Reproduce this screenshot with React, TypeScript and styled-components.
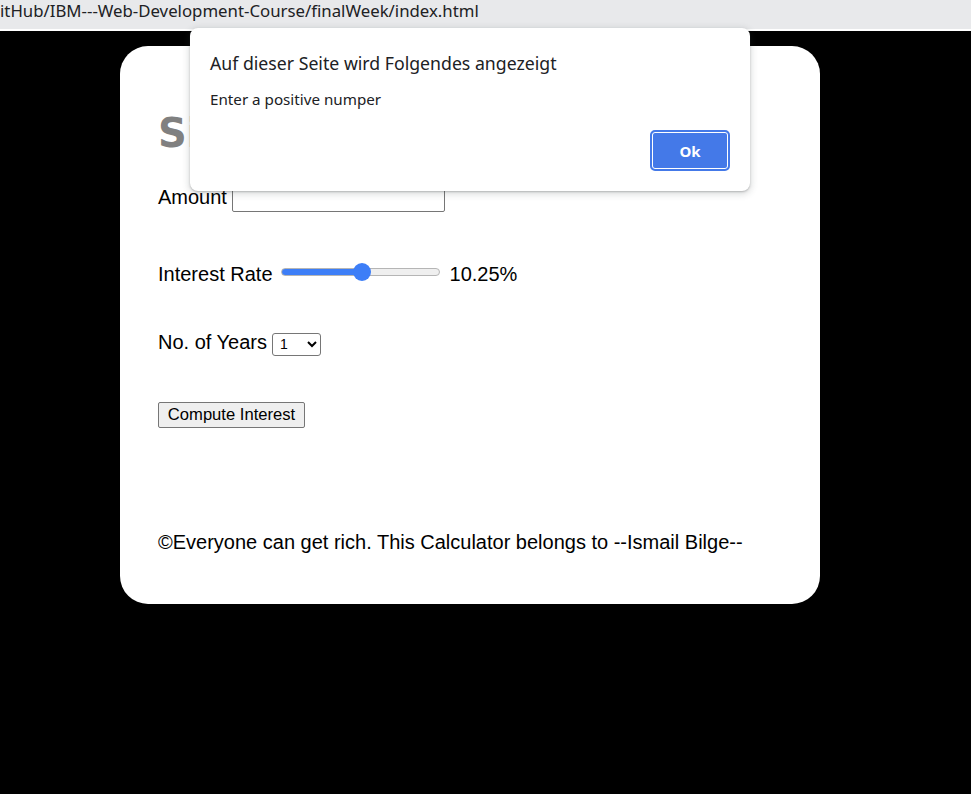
import React from "react";
import styled, { createGlobalStyle } from "styled-components";

const GlobalStyle = createGlobalStyle`
  html, body { margin: 0; padding: 0; background: #000; }
  body { font-family: "Liberation Sans", Arial, sans-serif; }
  #root { min-height: 794px; }
`;

const Screen = styled.div`
  position: relative;
  width: 971px;
  height: 794px;
  overflow: hidden;
  background: #000;
`;

const AddressBar = styled.div`
  height: 29px;
  border-bottom: 2px solid #ffffff;
  background: #e8e9eb;
  color: #202124;
  font-family: "Noto Sans", "Open Sans", sans-serif;
  font-size: 16.8px;
  line-height: 21px;
  white-space: nowrap;
  overflow: hidden;
`;

const Page = styled.div`
  padding: 15px 0 0 120px;
`;

const Card = styled.div`
  box-sizing: border-box;
  width: 700px;
  height: 558px;
  background: #fff;
  border-radius: 28px;
  padding: 64px 38px 0;
  color: #000;
  font-family: "Liberation Sans", Arial, sans-serif;
  font-size: 20px;
  line-height: 23px;
`;

const Title = styled.h1`
  margin: 0;
  font-family: "DejaVu Sans", Verdana, sans-serif;
  font-size: 40px;
  line-height: 46px;
  font-weight: bold;
  color: #808080;
  white-space: nowrap;
`;

const Row = styled.div<{ $gap: number }>`
  display: flex;
  align-items: baseline;
  gap: 5px;
  margin-top: ${(p) => p.$gap}px;
`;

const Label = styled.label`
  font-size: 20px;
  line-height: 23px;
`;

const TextInput = styled.input`
  box-sizing: border-box;
  width: 213px;
  height: 26px;
  margin: 0;
  padding: 1px 2px;
  border: 1px solid #767676;
  border-radius: 2px;
  font-family: "Liberation Sans", Arial, sans-serif;
  font-size: 16px;
  background: #fff;
`;

const Slider = styled.input`
  -webkit-appearance: none;
  appearance: none;
  width: 159px;
  height: 18px;
  margin: 0 5px 0 3px;
  background: transparent;

  &::-webkit-slider-runnable-track {
    height: 8px;
    border-radius: 4px;
    box-sizing: border-box;
    border: 1px solid #b5b5b5;
    background: linear-gradient(
      to right,
      #3d7ef7 0%,
      #3d7ef7 var(--fill),
      #efefef var(--fill),
      #efefef 100%
    );
  }
  &::-webkit-slider-thumb {
    -webkit-appearance: none;
    appearance: none;
    width: 18px;
    height: 18px;
    margin-top: -6px;
    border-radius: 50%;
    background: #3d7ef7;
    border: none;
  }
`;

const RateValue = styled.span`
  font-size: 20px;
  line-height: 23px;
`;

const YearSelect = styled.select`
  box-sizing: border-box;
  width: 49px;
  height: 23px;
  margin: 0;
  padding: 0 0 0 3px;
  border: 1px solid #767676;
  border-radius: 3px;
  font-family: "Liberation Sans", Arial, sans-serif;
  font-size: 14px;
  color: #000;
  background: #fff;
`;

const ComputeButton = styled.button`
  display: block;
  box-sizing: border-box;
  width: 147px;
  height: 26px;
  margin-top: 46px;
  padding: 1px 0;
  border: 1px solid #767676;
  border-radius: 2px;
  background: #efefef;
  color: #000;
  font-family: "Liberation Sans", Arial, sans-serif;
  font-size: 16.6px;
  text-align: center;
`;

const Footer = styled.p`
  margin: 103px 0 0;
  font-size: 20px;
  line-height: 23px;
  white-space: nowrap;
`;

const Dialog = styled.div`
  position: absolute;
  left: 190px;
  top: 28px;
  box-sizing: border-box;
  width: 560px;
  height: 163px;
  padding: 22px 20px 20px 20px;
  background: #fff;
  border-radius: 8px;
  box-shadow: 0 1px 2px rgba(60, 64, 67, 0.3), 0 2px 6px 2px rgba(60, 64, 67, 0.15);
  display: flex;
  flex-direction: column;
  font-family: "Noto Sans", "Open Sans", sans-serif;
  color: #202124;
`;

const DialogTitle = styled.div`
  font-size: 17.7px;
  line-height: 26px;
`;

const DialogMessage = styled.div`
  margin-top: 12px;
  font-size: 15.2px;
  line-height: 22px;
`;

const DialogActions = styled.div`
  margin-top: auto;
  display: flex;
  justify-content: flex-end;
`;

const OkButton = styled.button`
  box-sizing: border-box;
  width: 80px;
  height: 41px;
  border: 2px solid #4479e8;
  border-radius: 5px;
  box-shadow: inset 0 0 0 1px #ffffff;
  background: #4479e8;
  color: #fff;
  font-family: "Noto Sans", "Open Sans", sans-serif;
  font-size: 15px;
  font-weight: 700;
`;

export default function App() {
  const rate = 10.25;
  const min = 0;
  const max = 20;
  const fill = ((rate - min) / (max - min)) * 100;
  return (
    <Screen>
      <GlobalStyle />
      <AddressBar>itHub/IBM---Web-Development-Course/finalWeek/index.html</AddressBar>
      <Page>
        <Card>
          <Title>Simple Interest Calculator</Title>
          <Row $gap={30}>
            <Label htmlFor="amount">Amount</Label>
            <TextInput id="amount" type="number" />
          </Row>
          <Row $gap={51}>
            <Label htmlFor="rate">Interest Rate</Label>
            <Slider
              id="rate"
              type="range"
              min={min}
              max={max}
              step={0.25}
              defaultValue={rate}
              style={{ ["--fill" as any]: `${fill}%` }}
            />
            <RateValue>10.25%</RateValue>
          </Row>
          <Row $gap={45}>
            <Label htmlFor="years">No. of Years</Label>
            <YearSelect id="years" defaultValue="1">
              {Array.from({ length: 10 }, (_, i) => (
                <option key={i + 1} value={i + 1}>
                  {i + 1}
                </option>
              ))}
            </YearSelect>
          </Row>
          <ComputeButton type="button">Compute Interest</ComputeButton>
          <Footer>©Everyone can get rich. This Calculator belongs to --Ismail Bilge--</Footer>
        </Card>
      </Page>
      <Dialog role="alertdialog">
        <DialogTitle>Auf dieser Seite wird Folgendes angezeigt</DialogTitle>
        <DialogMessage>Enter a positive numper</DialogMessage>
        <DialogActions>
          <OkButton type="button">Ok</OkButton>
        </DialogActions>
      </Dialog>
    </Screen>
  );
}
